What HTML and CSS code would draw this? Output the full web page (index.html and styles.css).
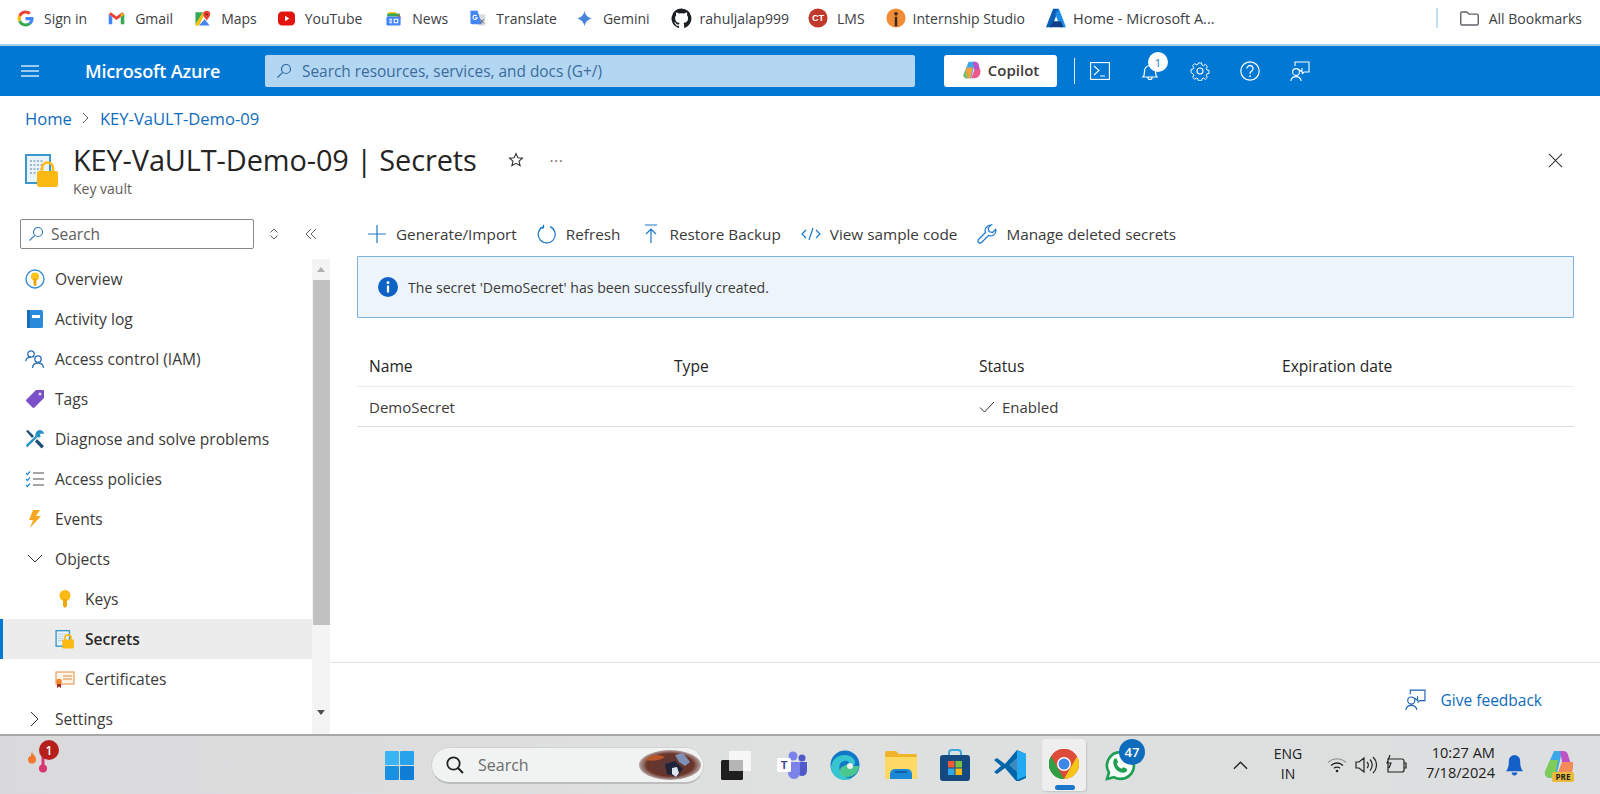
FILE: index.html
```html
<!DOCTYPE html>
<html lang="en">
<head>
<meta charset="utf-8">
<title>KEY-VaULT-Demo-09 | Secrets</title>
<link rel="stylesheet" href="styles.css">
</head>
<body>
<div class="page">
  <nav class="bookmarks">
    <a class="bm bm-signin"><svg class="bi" viewBox="0 0 24 24"><path fill="#ea4335" d="M12 5c1.7 0 3.2.6 4.4 1.7l3.2-3.2C17.600 1.700 15 .7 12 .7 7.600.7 3.800 3.200 2 6.900l3.700 2.900C6.600 7 9.100 5 12 5z"/><path fill="#4285f4" d="M23.300 12.300c0-.8-.1-1.600-.2-2.300H12v4.500h6.300c-.3 1.500-1.100 2.700-2.400 3.500l3.600 2.800c2.200-2 3.800-5 3.800-8.500z"/><path fill="#fbbc05" d="M5.700 14.200c-.5-1.400-.5-3 0-4.400L2 6.900c-1.600 3.200-1.600 7 0 10.200z"/><path fill="#34a853" d="M12 23.300c3 0 5.600-1 7.500-2.700L15.900 18c-1 .7-2.300 1.100-3.900 1.100-2.900 0-5.400-2-6.300-4.700L2 17.100c1.800 3.700 5.600 6.200 10 6.200z"/></svg>Sign in</a>
    <a class="bm bm-gmail"><svg class="bi" viewBox="0 0 24 24"><path fill="#4285f4" d="M1 6v14h5V10z"/><path fill="#34a853" d="M18 10v10h5V6z"/><path fill="#ea4335" d="M1 6l11 8 11-8-3-3-8 6-8-6z"/><path fill="#fbbc05" d="M18 4.500L23 6v0l-5 4z"/></svg>Gmail</a>
    <a class="bm bm-maps"><svg class="bi" viewBox="0 0 24 24"><path fill="#34a853" d="M2 3l11 0-11 17z"/><path fill="#fbbc05" d="M2 20L13 3h3L7 22H2z"/><path fill="#4285f4" d="M7 22l8-9 7 9z"/><path fill="#ea4335" d="M18 1a5 5 0 0 1 5 5c0 3-3 5-5 9-1-3-5-5-5-9a5 5 0 0 1 5-5z"/><circle cx="18" cy="6" r="1.800" fill="#8e2a1f"/></svg>Maps</a>
    <a class="bm bm-yt"><svg class="bi" viewBox="0 0 24 24"><rect x="0" y="2" width="24" height="20" rx="6" fill="#e3130f"/><path fill="#fff" d="M10 8l6 4-6 4z"/></svg>YouTube</a>
    <a class="bm bm-news"><svg class="bi" viewBox="0 0 24 24"><path fill="#fbbc05" d="M5 3h11v6H5z"/><path fill="#34a853" d="M3 5h18v4H3z"/><path fill="#ea4335" d="M18 6l4 3v3h-4z"/><rect x="2" y="9" width="20" height="13" rx="2" fill="#4285f4"/><path stroke="#fff" stroke-width="1.500" fill="none" d="M6 13h4M6 15.500h4M6 18h4M13 13h5v5h-5z"/></svg>News</a>
    <a class="bm bm-tr"><svg class="bi" viewBox="0 0 24 24"><path fill="#dadce0" d="M10 6h13v16H13z"/><path fill="#4285f4" d="M2 1h10l6 19H4a2 2 0 0 1-2-2z"/><path fill="none" stroke="#fff" stroke-width="1.500" d="M11 8.500a3 3 0 1 0 .5 2.500H8.500"/><path stroke="#5f6368" stroke-width="1.400" d="M16 13l5 6M21 13l-5 6"/></svg>Translate</a>
    <a class="bm bm-gem"><svg class="bi" viewBox="0 0 24 24"><path fill="#4b84dc" d="M12 1c1 6 5 10 11 11-6 1-10 5-11 11-1-6-5-10-11-11 6-1 10-5 11-11z"/></svg>Gemini</a>
    <a class="bm bm-gh"><svg class="bi bi-lg" viewBox="0 0 24 24"><path fill="#1b1f23" d="M12 .5a11.500 11.500 0 0 0-3.600 22.400c.6.100.8-.3.800-.6v-2c-3.200.7-3.900-1.500-3.900-1.500-.5-1.300-1.300-1.700-1.300-1.700-1-.7.100-.7.100-.7 1.200.1 1.800 1.200 1.800 1.200 1 1.800 2.700 1.300 3.400 1 .1-.8.400-1.300.7-1.600-2.600-.3-5.300-1.300-5.300-5.700 0-1.300.4-2.300 1.200-3.100-.1-.3-.5-1.500.1-3.100 0 0 1-.3 3.200 1.200a11 11 0 0 1 5.800 0c2.200-1.500 3.200-1.200 3.200-1.200.6 1.600.2 2.800.1 3.100.7.800 1.200 1.800 1.200 3.100 0 4.400-2.700 5.400-5.300 5.700.4.400.8 1 .8 2.100v3.100c0 .3.200.7.800.6A11.500 11.500 0 0 0 12 .5z"/></svg>rahuljalap999</a>
    <a class="bm bm-lms"><svg class="bi bi-md" viewBox="0 0 24 24"><circle cx="12" cy="12" r="11.500" fill="#c0392b"/><text x="12" y="16" class="lms-mark">CT</text></svg>LMS</a>
    <a class="bm bm-int"><svg class="bi bi-md" viewBox="0 0 24 24"><circle cx="12" cy="12" r="11.500" fill="#f08c35"/><circle cx="12" cy="7" r="2.200" fill="#3b2a20"/><path fill="#3b2a20" d="M10.500 10.500h3V22h-3z"/></svg>Internship Studio</a>
    <a class="bm bm-az"><svg class="bi bi-md" viewBox="0 0 24 24"><path fill="#0a5fb4" d="M8.500 1h7L7 23H0z"/><path fill="#1c8ee6" d="M15.500 1l8.500 22h-7L11 7z"/><path fill="#0f3f86" d="M9 16h9l3 7H4z"/></svg>Home - Microsoft A...</a>
    <span class="bm-spacer"></span>
    <span class="bm-divider"></span>
    <a class="bm bm-all"><svg class="bi bi-lg" viewBox="0 0 24 24"><path fill="none" stroke="#5f6368" stroke-width="1.600" d="M2 6a1.500 1.500 0 0 1 1.500-1.500H9l2.500 2.500h9A1.500 1.500 0 0 1 22 8.500V18a1.500 1.500 0 0 1-1.500 1.500h-17A1.500 1.500 0 0 1 2 18z"/></svg>All Bookmarks</a>
  </nav>

  <header class="topbar">
    <svg class="hamburger" viewBox="0 0 18 12"><path stroke="#cfe6f8" stroke-width="1.300" d="M0 1h18M0 6h18M0 11h18"/></svg>
    <span class="brand">Microsoft Azure</span>
    <div class="global-search">
      <svg class="gs-icon" viewBox="0 0 16 16"><circle cx="10" cy="6" r="4.500" fill="none" stroke="#2c6aa6" stroke-width="1.200"/><path stroke="#2c6aa6" stroke-width="1.200" d="M6.700 9.300L1.500 14.500"/></svg>
      <span>Search resources, services, and docs (G+/)</span>
    </div>
    <div class="copilot">
      <svg class="cp-icon" viewBox="0 0 24 24"><path fill="#3aa7e8" d="M8 2h8l-5 20H6a4 4 0 0 1-4-5z"/><path fill="#c052c8" d="M13 2h3a4 4 0 0 1 4 3l2 9h-7z"/><path fill="#f5a13a" d="M6 9h7l-3 13H6a4 4 0 0 1-4-5z"/><path fill="#6bc36b" d="M4 12l3 10H5a3 3 0 0 1-3-4z"/><path fill="#ec5a8c" d="M15 11h7v4a7 7 0 0 1-7 7h-4z"/></svg>
      <span>Copilot</span>
    </div>
    <span class="tb-divider"></span>
    <svg class="tb-icon tb-term" viewBox="0 0 20 20"><rect x=".6" y="1.600" width="18.800" height="16.800" fill="none" stroke="#fff" stroke-width="1.100"/><path fill="none" stroke="#fff" stroke-width="1.100" d="M4 5l5 4.500L4 14M10 15h5"/></svg>
    <div class="tb-bell">
      <svg class="tb-icon" viewBox="0 0 20 20"><path fill="none" stroke="#fff" stroke-width="1.200" d="M3 16c1.500-1.500 1.500-3 1.500-6a5.500 5.500 0 0 1 11 0c0 3 0 4.500 1.500 6zM8 16.500a2 2 0 0 0 4 0"/></svg>
      <span class="tb-badge">1</span>
    </div>
    <svg class="tb-icon tb-gear" viewBox="0 0 20 20"><path fill="none" stroke="#fff" stroke-width="1.100" d="M8.300 1h3.400l.5 2.400 1.700.7 2-1.300 2.300 2.300-1.300 2 .7 1.700 2.400.5v3.400l-2.400.5-.7 1.700 1.300 2-2.300 2.300-2-1.300-1.700.7-.5 2.400H8.300l-.5-2.400-1.700-.7-2 1.300-2.300-2.300 1.300-2-.7-1.700L0 11.700V8.300l2.400-.5.7-1.700-1.300-2 2.300-2.300 2 1.300 1.700-.7z" transform="translate(1 1) scale(.9)"/><circle cx="10" cy="10" r="3" fill="none" stroke="#fff" stroke-width="1.100"/></svg>
    <svg class="tb-icon tb-help" viewBox="0 0 20 20"><circle cx="10" cy="10" r="9.200" fill="none" stroke="#fff" stroke-width="1.200"/><path fill="none" stroke="#fff" stroke-width="1.300" d="M7 7.500a3 3 0 1 1 4.700 2.500c-1.200.8-1.700 1.400-1.700 2.700"/><circle cx="10" cy="15.200" r=".9" fill="#fff"/></svg>
    <svg class="tb-icon tb-fb" viewBox="0 0 20 20"><path fill="none" stroke="#fff" stroke-width="1.100" d="M5 5V1h14v10h-5l-2 2M9 8.500l3 2.500V7"/><circle cx="6" cy="11" r="3.400" fill="none" stroke="#fff" stroke-width="1.100"/><path fill="none" stroke="#fff" stroke-width="1.100" d="M.7 20a5.400 5.400 0 0 1 10.600 0"/></svg>
  </header>

  <main class="blade">
    <div class="crumbs"><a>Home</a><svg class="crumb-sep" viewBox="0 0 8 12"><path fill="none" stroke="#605e5c" stroke-width="1" d="M1 1l5 5-5 5"/></svg><a>KEY-VaULT-Demo-09</a></div>
    <div class="blade-head">
      <svg class="vault-icon" viewBox="0 0 34 36"><rect x="1" y="3" width="24" height="28" fill="#eaf3fa" stroke="#3f97c9" stroke-width="2"/><path stroke="#9cbcd4" stroke-width="2" stroke-dasharray="2 1.500" d="M5 9h14M5 13h14M5 17h14M5 21h10"/><rect x="12" y="19" width="21" height="16" rx="2" fill="#fdb913"/><path fill="none" stroke="#fdb913" stroke-width="2.600" d="M17 20v-4a5.500 5.500 0 0 1 11 0v4"/></svg>
      <div class="head-text">
        <div class="title-row">
          <h1>KEY-VaULT-Demo-09 | Secrets</h1>
          <svg class="star" viewBox="0 0 16 16"><path fill="none" stroke="#323130" stroke-width="1.100" d="M8 1.500l1.900 4.300 4.600.4-3.500 3 1.100 4.500L8 11.300l-4.100 2.400L5 9.200l-3.500-3 4.600-.4z"/></svg>
          <span class="more">···</span>
        </div>
        <div class="subtitle">Key vault</div>
      </div>
      <svg class="close" viewBox="0 0 16 16"><path stroke="#323130" stroke-width="1.100" d="M1 1l14 14M15 1L1 15"/></svg>
    </div>

    <div class="workspace">
      <aside class="side">
        <div class="side-tools">
          <div class="side-search">
            <svg class="ss-icon" viewBox="0 0 16 16"><circle cx="10" cy="6" r="4.500" fill="none" stroke="#2e78b8" stroke-width="1.100"/><path stroke="#2e78b8" stroke-width="1.100" d="M6.700 9.300L1.500 14.500"/></svg>
            <span>Search</span>
          </div>
          <svg class="updown" viewBox="0 0 10 14"><path fill="none" stroke="#605e5c" d="M1.500 5.500L5 2l3.500 3.500M1.500 8.500L5 12l3.500-3.500"/></svg>
          <svg class="collapse" viewBox="0 0 12 12"><path fill="none" stroke="#605e5c" d="M6 1L1 6l5 5M11 1L6 6l5 5"/></svg>
        </div>
        <div class="side-body">
          <ul class="menu">
            <li class="item"><svg class="mi" viewBox="0 0 20 20"><circle cx="10" cy="10" r="9" fill="#fff" stroke="#3b8fd1" stroke-width="1.400"/><circle cx="10" cy="7.500" r="4" fill="#fcc419"/><path fill="#eba90e" d="M8.500 9h3v7l-1.500 1.500L8.500 16z"/></svg>Overview</li>
            <li class="item"><svg class="mi" viewBox="0 0 20 20"><rect x="2" y="1" width="16" height="18" rx="1.500" fill="#2a8bdc"/><rect x="2" y="1" width="3" height="18" fill="#1b6cb2"/><rect x="7" y="6" width="8" height="3" fill="#fff"/></svg>Activity log</li>
            <li class="item"><svg class="mi" viewBox="0 0 20 20"><g fill="none" stroke="#2a6fb8" stroke-width="1.300"><circle cx="6" cy="5" r="3.200"/><path d="M.7 12c.5-2.500 2.500-3.800 5.300-3.800"/><circle cx="13" cy="10" r="3.200"/><path d="M7.500 19c.3-3 2.500-5 5.500-5s5.200 2 5.500 5"/></g></svg>Access control (IAM)</li>
            <li class="item"><svg class="mi" viewBox="0 0 20 20"><path fill="#7b4fc9" d="M11 1h7a1 1 0 0 1 1 1v7L9.500 18.500a1.500 1.500 0 0 1-2 0l-6-6a1.500 1.500 0 0 1 0-2z"/><circle cx="15" cy="5" r="1.500" fill="#e2d6f5"/></svg>Tags</li>
            <li class="item"><svg class="mi" viewBox="0 0 20 20"><path fill="#2590c4" d="M15 1a4.500 4.500 0 0 1 4 4l-3-.5-1 1 .5 2.500c-1 .5-2 .5-3 0L2 18.500 1 16 10.500 7c-.5-2 .8-6 4.500-6z"/><path fill="#1f4e79" d="M1 2l2-1 6 6-2 2zM12 10l7 7-2.500 2.500L10 12.500z"/></svg>Diagnose and solve problems</li>
            <li class="item"><svg class="mi" viewBox="0 0 20 20"><path fill="none" stroke="#2a8bdc" stroke-width="1.200" d="M1 4l1.500 1.500L5 2.500M1 10l1.500 1.500L5 8.500M1 16l1.500 1.500L5 14.500"/><path stroke="#8a8886" stroke-width="1.500" d="M8 4h11M8 10h11M8 16h11"/></svg>Access policies</li>
            <li class="item"><svg class="mi" viewBox="0 0 20 20"><path fill="#f7a823" d="M8 1h7l-4 6h5L5 19l3-8H4z"/></svg>Events</li>
            <li class="item"><svg class="mi chev" viewBox="0 0 16 10"><path fill="none" stroke="#323130" stroke-width="1" d="M1 1l7 7 7-7"/></svg>Objects</li>
            <li class="item sub"><svg class="mi" viewBox="0 0 20 20"><circle cx="10" cy="6.500" r="5.500" fill="#fdb913"/><path fill="#eba90e" d="M8 10h4v7l-2 2-2-2z"/></svg>Keys</li>
            <li class="item sub active"><svg class="mi" viewBox="0 0 34 36"><rect x="1" y="3" width="24" height="28" fill="#eaf3fa" stroke="#3f97c9" stroke-width="2.500"/><path stroke="#9cbcd4" stroke-width="2" stroke-dasharray="2 1.500" d="M5 9h14M5 13h14M5 17h14M5 21h10"/><rect x="12" y="19" width="21" height="16" rx="2" fill="#fdb913"/><path fill="none" stroke="#fdb913" stroke-width="3" d="M17 20v-4a5.500 5.500 0 0 1 11 0v4"/></svg>Secrets</li>
            <li class="item sub"><svg class="mi" viewBox="0 0 20 20"><rect x="1" y="3" width="18" height="12" fill="#fdf3e6" stroke="#e5a15e" stroke-width="1.200"/><path stroke="#d98b45" stroke-width="1" d="M8 7h9M8 10h9"/><path fill="#b02318" d="M2 13h4v6l-2-1.500L2 19z"/><circle cx="4" cy="12.500" r="2.800" fill="#ee8a2f"/></svg>Certificates</li>
            <li class="item"><svg class="mi chev chev-r" viewBox="0 0 10 16"><path fill="none" stroke="#323130" stroke-width="1" d="M1 1l7 7-7 7"/></svg>Settings</li>
          </ul>
          <div class="scroll">
            <span class="arrow arrow-up"></span>
            <span class="thumb"></span>
            <span class="arrow arrow-down"></span>
          </div>
        </div>
      </aside>

      <section class="main">
        <div class="content">
          <div class="toolbar">
            <span class="tool"><svg class="ti" viewBox="0 0 20 20"><path stroke="#1a78c8" stroke-width="1.200" d="M10 1v18M1 10h18"/></svg>Generate/Import</span>
            <span class="tool"><svg class="ti ti-refresh" viewBox="0 0 20 20"><path fill="none" stroke="#1a78c8" stroke-width="1.200" d="M13 2.600a8.500 8.500 0 1 1-7 .2M6.500 .8v3H3"/></svg>Refresh</span>
            <span class="tool"><svg class="ti" viewBox="0 0 20 20"><path fill="none" stroke="#1a78c8" stroke-width="1.200" d="M4 1h12M10 19V5M5 10l5-5 5 5"/></svg>Restore Backup</span>
            <span class="tool"><svg class="ti" viewBox="0 0 20 20"><path fill="none" stroke="#1a78c8" stroke-width="1.200" d="M5 6l-4 4 4 4M15 6l4 4-4 4M12 4L8 16"/></svg>View sample code</span>
            <span class="tool"><svg class="ti" viewBox="0 0 20 20"><path fill="none" stroke="#1a78c8" stroke-width="1.200" d="M13.500 1a5.500 5.500 0 0 0-5 7.500L1.500 15.500a2.100 2.100 0 0 0 3 3l7-7a5.500 5.500 0 0 0 7.500-5l-.3-1.200-3.200 3.200-3.500-1-1-3.500 3.200-3.200z"/></svg>Manage deleted secrets</span>
          </div>
          <div class="notice">
            <svg class="info" viewBox="0 0 20 20"><circle cx="10" cy="10" r="10" fill="#0f62c4"/><rect x="8.900" y="8.500" width="2.200" height="7" fill="#fff"/><circle cx="10" cy="5.700" r="1.400" fill="#fff"/></svg>
            The secret 'DemoSecret' has been successfully created.
          </div>
          <div class="grid-table">
            <div class="row head"><span>Name</span><span>Type</span><span>Status</span><span>Expiration date</span></div>
            <div class="row body-row"><span>DemoSecret</span><span></span><span class="status"><svg class="check" viewBox="0 0 16 12"><path fill="none" stroke="#323130" stroke-width="1" d="M1 6.500L5.500 11 15 1"/></svg>Enabled</span><span></span></div>
          </div>
        </div>
        <div class="foot">
          <svg class="fb-icon" viewBox="0 0 20 20"><path fill="none" stroke="#1f62b5" stroke-width="1.100" d="M5 5V1h14v10h-5l-2 2M9 8.500l3 2.500V7"/><circle cx="6" cy="11" r="3.400" fill="none" stroke="#1f62b5" stroke-width="1.100"/><path fill="none" stroke="#1f62b5" stroke-width="1.100" d="M.7 20a5.400 5.400 0 0 1 10.600 0"/></svg>
          <a>Give feedback</a>
        </div>
      </section>
    </div>
  </main>

  <footer class="taskbar">
    <div class="tk-left">
      <svg class="tk-fire" viewBox="0 0 10 12"><path fill="#f2762e" d="M5 0c1 3 4 4 4 7.500A4 4 0 0 1 1 7.500C1 6 2 5 2.500 4 3 5 4 5 4 4S4 1.500 5 0z"/></svg>
      <svg class="tk-thermo" viewBox="0 0 12 22"><rect x="4.500" y="0" width="3" height="16" fill="#d9356e"/><circle cx="6" cy="16.500" r="4" fill="#d9356e"/></svg>
      <span class="tk-red">1</span>
    </div>
    <div class="tk-center">
      <svg class="tk-win" viewBox="0 0 29 29"><rect width="14" height="14" rx="1" fill="#3ab4f2"/><rect x="15" width="14" height="14" rx="1" fill="#28a2ea"/><rect y="15" width="14" height="14" rx="1" fill="#1a90e0"/><rect x="15" y="15" width="14" height="14" rx="1" fill="#0f7dd4"/></svg>
      <div class="tk-search">
        <svg class="tk-q" viewBox="0 0 18 18"><circle cx="7.500" cy="7.500" r="6.200" fill="none" stroke="#222" stroke-width="1.800"/><path stroke="#222" stroke-width="2" d="M12 12l5 5"/></svg>
        <span>Search</span>
        <svg class="tk-art" viewBox="0 0 62 30"><defs><radialGradient id="artGlow" cx=".5" cy=".5" r=".5"><stop offset="0" stop-color="#5a3a3a"/><stop offset=".75" stop-color="#6a3428"/><stop offset="1" stop-color="#b9a6a6"/></radialGradient></defs><ellipse cx="31" cy="15" rx="31" ry="15" fill="url(#artGlow)"/><path fill="#b8552a" d="M6 10c6-6 14-6 20-3-4 3-12 5-20 3z"/><path fill="#7f8fb5" d="M36 5l8-2 7 9-5 4-6-4z"/><path fill="#20243a" d="M26 14l10-3 8 8-6 8-10-3z"/><path fill="#dfe4ee" d="M33 18l5-1 2 6-3 4-4-3z"/></svg>
      </div>
      <svg class="tk-view" viewBox="0 0 30 29"><rect x="8" y="0" width="22" height="20" fill="#f7f7f7"/><rect x="0" y="9" width="22" height="20" rx="1.500" fill="#1f1f1f"/><rect x="8" y="9" width="14" height="11" fill="#b5b5b5"/></svg>
      <svg class="tk-teams" viewBox="0 0 30 28"><circle cx="16" cy="5" r="4.500" fill="#7b83eb"/><circle cx="25" cy="7" r="3.500" fill="#5059c9"/><path fill="#5059c9" d="M20 11h10v9a5 5 0 0 1-8 4z"/><path fill="#7b83eb" d="M8 11h15v11a6 6 0 0 1-12 0z"/><rect x="0" y="7" width="14" height="14" rx="1.500" fill="#fff"/><text x="7" y="18" class="teams-t">T</text></svg>
      <svg class="tk-edge" viewBox="0 0 30 30"><circle cx="15" cy="15" r="14.500" fill="#1277c8"/><path fill="#37c6d0" d="M1 17C2 9 8 5 15 5c6 0 10 4 10 8 0 2-2 3-5 3 1-3-2-6-6-5-5 1-6 7-3 12 2 3 6 6 11 5-1 1-3 2-7 2C7 30 1 24 1 17z"/><path fill="#5ee07c" d="M16 15c1-1 4-1 4 1l9 0c0 6-5 11-12 11-5 0-7-3-7-7 0-2 2-4 6-5z" opacity=".75"/><circle cx="20" cy="16" r="3" fill="#eee"/></svg>
      <svg class="tk-folder" viewBox="0 0 32 28"><path fill="#f0b429" d="M0 2a2 2 0 0 1 2-2h9l3 3h16a2 2 0 0 1 2 2v21a2 2 0 0 1-2 2H2a2 2 0 0 1-2-2z"/><path fill="#ffd966" d="M0 6h32v20a2 2 0 0 1-2 2H2a2 2 0 0 1-2-2z"/><path fill="#1a8ad8" d="M5 28v-5a5 5 0 0 1 5-5h12a5 5 0 0 1 5 5v5z"/><rect x="10" y="20" width="12" height="2" fill="#0d5fa8"/></svg>
      <svg class="tk-store" viewBox="0 0 30 32"><path fill="none" stroke="#3aa6e0" stroke-width="2" d="M9 7V4a3 3 0 0 1 3-3h6a3 3 0 0 1 3 3v3"/><rect y="6" width="30" height="26" rx="3" fill="#144a80"/><rect x="8" y="12" width="6.500" height="6.500" fill="#ee5a3a"/><rect x="15.500" y="12" width="6.500" height="6.500" fill="#7cc242"/><rect x="8" y="19.500" width="6.500" height="6.500" fill="#2ea8e8"/><rect x="15.500" y="19.500" width="6.500" height="6.500" fill="#fdb913"/></svg>
      <svg class="tk-code" viewBox="0 0 32 32"><path fill="#0065a9" d="M0 11l3-2 8 6 12-14 9 4v24l-9 4-12-14-8 6-3-2 7-6z"/><path fill="#23a9f2" d="M23 1l9 4v22l-9 4z"/><path fill="#fff" opacity=".25" d="M23 9l-8 7 8 7z"/></svg>
      <div class="tk-chrome">
        <svg class="tk-chrome-i" viewBox="0 0 30 30"><circle cx="15" cy="15" r="15" fill="#dd4b39"/><path fill="#2f9e44" d="M2 7.500L15 30a15 15 0 0 1-13-22.500z"/><path fill="#f5c518" d="M28 7.500L15 30a15 15 0 0 0 13-22.500z"/><path fill="#2f9e44" d="M2 7.500l7 13 6 9.500A15 15 0 0 1 2 7.500z"/><path fill="#dd4b39" d="M2 7.500A15 15 0 0 1 28 7.500H15z"/><circle cx="15" cy="15" r="7" fill="#fff"/><circle cx="15" cy="15" r="5.500" fill="#3d85e6"/></svg>
        <span class="tk-pill"></span>
      </div>
      <div class="tk-wa">
        <svg class="tk-wa-i" viewBox="0 0 30 30"><path fill="#f6fff8" stroke="#1f9e54" stroke-width="2.600" d="M15 2a13 13 0 0 1 0 26c-2.500 0-4.500-.6-6.500-1.700L2 28l1.800-6.300A13 13 0 0 1 15 2z"/><path fill="#1f9e54" d="M10.500 8c1 0 1.500 2.500 2 3.500 0 1-1 1.500-1 2.200 1 2 2.500 3.500 4.500 4.300.7 0 1.300-1.300 2-1.300 1 .5 3.500 1.500 3.500 2.300 0 1.500-2 3-3.800 3C12 22 8 16.500 8 12c0-2 1.300-4 2.500-4z"/></svg>
        <span class="tk-wa-badge">47</span>
      </div>
    </div>
    <div class="tk-tray">
      <svg class="tk-chev" viewBox="0 0 16 10"><path fill="none" stroke="#222" stroke-width="1.400" d="M1 9l7-7 7 7"/></svg>
      <div class="tk-lang"><span>ENG</span><span>IN</span></div>
      <svg class="tk-wifi" viewBox="0 0 20 16"><path fill="none" stroke="#9a9a9a" stroke-width="1.300" d="M1 5.500a13 13 0 0 1 18 0"/><path fill="none" stroke="#222" stroke-width="1.300" d="M4 8.500a8.500 8.500 0 0 1 12 0M7 11.300a4.200 4.200 0 0 1 6 0"/><circle cx="10" cy="14" r="1.300" fill="#222"/></svg>
      <svg class="tk-vol" viewBox="0 0 22 20"><path fill="none" stroke="#222" stroke-width="1.200" d="M1 7v6h3l5 4V3L4 7zM12 7a4 4 0 0 1 0 6M15 4.500a8 8 0 0 1 0 11M18 2a11 11 0 0 1 0 16"/></svg>
      <svg class="tk-bat" viewBox="0 0 22 22"><path fill="none" stroke="#222" stroke-width="1.200" d="M3 5h14a2 2 0 0 1 2 2v9a2 2 0 0 1-2 2H3zM19 9h2v5h-2M5 1L2 9h4l-2 5"/></svg>
      <div class="tk-clock"><span>10:27 AM</span><span>7/18/2024</span></div>
      <svg class="tk-bell" viewBox="0 0 18 22"><path fill="#1560c8" d="M9 0a6 6 0 0 1 6 6c0 5 .5 8 3 11H0c2.500-3 3-6 3-11a6 6 0 0 1 6-6z"/><path fill="#1560c8" d="M6 18.500h6a3 3 0 0 1-6 0z"/></svg>
      <div class="tk-cp">
        <svg class="tk-cp-i" viewBox="0 0 30 30"><path fill="#3aa7e8" d="M10 1h8l-6 27H6a5 5 0 0 1-5-6z"/><path fill="#c052c8" d="M16 1h3a5 5 0 0 1 5 4l4 12h-9z"/><path fill="#7ecb5a" d="M6 10h8l-3 18H6a5 5 0 0 1-5-6z"/><path fill="#f28a5a" d="M18 12h11v5a11 11 0 0 1-11 11h-6z"/></svg>
        <span class="tk-pre">PRE</span>
      </div>
    </div>
  </footer>
</div>
</body>
</html>
```
FILE: styles.css
```css
* { box-sizing: border-box; }
html, body { margin: 0; height: 100%; overflow: hidden; }
body { font-family: "Open Sans", "Noto Sans", "Liberation Sans", sans-serif; color: #323130; background: #fff; }
a { color: inherit; text-decoration: none; }
ul { list-style: none; margin: 0; padding: 0; }
.page { display: flex; flex-direction: column; height: 794px; width: 1600px; }

/* bookmarks */
.bookmarks { height: 46px; flex: none; display: flex; align-items: center; padding: 0 18px 8px 17px; border-bottom: 2px solid #a9d1ea; font-size: 14px; color: #3c4043; background: #fff; }
.bm { display: flex; align-items: center; gap: 10px; margin-right: 21px; white-space: nowrap; }
.bm-yt { margin-right: 23px; }
.bm-tr { margin-right: 19px; }
.bm-gh { gap: 8px; margin-right: 19px; }
.bm-lms { gap: 9px; margin-right: 21px; }
.bm-int { gap: 7px; margin-right: 21px; }
.bm-az { gap: 7px; font-size: 14.500px; }
.bi { width: 17px; height: 17px; flex: none; }
.bi-md { width: 20px; height: 20px; }
.bi-lg { width: 21px; height: 21px; }
.lms-mark { font-family: "Liberation Sans", sans-serif; font-size: 11px; font-weight: 700; fill: #fff; text-anchor: middle; }
.bm-spacer { flex: 1; }
.bm-divider { width: 2px; height: 20px; background: #bfe0ee; margin-right: 21px; }
.bm-all { margin-right: 0; gap: 9px; }

/* top bar */
.topbar { height: 50px; flex: none; background: #0078d4; display: flex; align-items: center; padding-left: 21px; color: #fff; }
.hamburger { width: 18px; height: 12px; flex: none; }
.brand { margin-left: 46px; width: 180px; font-size: 18.100px; font-weight: 600; letter-spacing: -.2px; white-space: nowrap; }
.global-search { width: 650px; height: 32px; background: #b3d6f2; border-radius: 2px; display: flex; align-items: center; gap: 10px; padding: 0 0 0 11px; font-size: 15.400px; color: #3b6c9c; }
.gs-icon { width: 16px; height: 16px; }
.copilot { margin-left: 29px; width: 113px; height: 32px; background: #fff; border-radius: 3px; display: flex; align-items: center; justify-content: center; gap: 6px; padding-bottom: 2px; color: #3b3a39; font-size: 15px; font-weight: 600; }
.cp-icon { width: 20px; height: 20px; }
.tb-divider { width: 1px; height: 26px; background: #d7ebf9; margin: 0 15px 0 17px; }
.tb-icon { width: 20px; height: 20px; flex: none; }
.tb-bell { position: relative; margin-left: 30px; width: 20px; height: 20px; }
.tb-badge { position: absolute; left: 8px; top: -9px; width: 20px; height: 20px; border-radius: 50%; background: #fff; color: #0078d4; font-size: 11px; display: flex; align-items: center; justify-content: center; }
.tb-gear { margin-left: 30px; }
.tb-help { margin-left: 30px; }
.tb-fb { margin-left: 30px; }

/* blade */
.blade { flex: 1; min-height: 0; display: flex; flex-direction: column; }
.crumbs { height: 44px; flex: none; padding-left: 25px; display: flex; align-items: center; gap: 10px; font-size: 16.600px; color: #0f6cbd; }
.crumb-sep { width: 8px; height: 12px; }
.blade-head { height: 79px; flex: none; display: flex; align-items: flex-start; padding: 2px 37px 0 25px; }
.vault-icon { width: 34px; height: 36px; margin-top: 10px; flex: none; }
.head-text { margin-left: 14px; flex: 1; }
.title-row { display: flex; align-items: center; height: 36px; }
h1 { margin: 0; font-size: 28.900px; font-weight: 500; color: #252423; line-height: 36px; letter-spacing: -.1px; white-space: nowrap; }
.star { width: 16px; height: 16px; margin-left: 31px; }
.more { margin-left: 26px; font-size: 14px; letter-spacing: 1px; color: #605e5c; }
.subtitle { font-size: 14px; color: #605e5c; margin-top: 2px; line-height: 18px; }
.close { width: 15px; height: 15px; margin-top: 11px; }

.workspace { flex: 1; min-height: 0; display: flex; }
.side { width: 330px; flex: none; display: flex; flex-direction: column; }
.side-tools { height: 40px; flex: none; display: flex; align-items: flex-start; padding-left: 20px; }
.side-search { width: 234px; height: 30px; border: 1px solid #8a8886; border-radius: 2px; display: flex; align-items: center; gap: 7px; padding-left: 7px; font-size: 15.500px; color: #605e5c; }
.ss-icon { width: 16px; height: 16px; }
.updown { width: 10px; height: 14px; margin: 8px 0 0 15px; }
.collapse { width: 12px; height: 12px; margin: 9px 0 0 26px; }
.side-body { flex: 1; min-height: 0; display: flex; }
.menu { width: 312px; flex: none; overflow: hidden; }
.item { height: 40px; display: flex; align-items: center; gap: 10px; padding-left: 25px; font-size: 15.600px; color: #3b3a39; white-space: nowrap; }
.mi { width: 20px; height: 20px; flex: none; }
.chev { width: 16px; height: 10px; margin-right: 2px; margin-left: 2px; }
.chev-r { width: 10px; height: 16px; margin-left: 5px; margin-right: 5px; }
.sub { padding-left: 55px; }
.active { background: #ececec; font-weight: 600; box-shadow: inset 3px 0 0 #0078d4; color: #292827; }
.scroll { width: 18px; flex: none; background: #f4f4f4; display: flex; flex-direction: column; align-items: center; }
.thumb { width: 17px; height: 345px; background: #c1c1c1; margin-left: 1px; }
.arrow { width: 0; height: 0; border-left: 4px solid transparent; border-right: 4px solid transparent; }
.arrow-up { border-bottom: 5px solid #b0b0b0; margin: 8px 0 8px; }
.arrow-down { border-top: 5px solid #505050; margin-top: 85px; }

.main { flex: 1; min-width: 0; display: flex; flex-direction: column; }
.content { flex: 1; min-height: 0; padding: 0 26px 0 27px; }
.toolbar { height: 37px; display: flex; align-items: flex-start; gap: 20px; padding-left: 10px; font-size: 15.300px; color: #3b3a39; }
.tool { display: flex; align-items: center; gap: 9px; height: 30px; white-space: nowrap; }
.ti { width: 20px; height: 20px; flex: none; }
.notice { height: 62px; background: #edf4fc; border: 1px solid #7fb0dc; border-radius: 1px; display: flex; align-items: center; gap: 10px; padding-left: 20px; font-size: 14.100px; color: #3b3a39; }
.info { width: 20px; height: 20px; flex: none; }
.grid-table { margin-top: 27px; }
.row { display: grid; grid-template-columns: 305px 305px 303px 1fr; padding-left: 12px; align-items: center; font-size: 15px; }
.head { height: 42px; border-bottom: 1px solid #edebe9; font-size: 15.600px; font-weight: 500; color: #252423; }
.body-row { height: 40px; border-bottom: 1px solid #dcdcdc; color: #3b3a39; }
.status { display: flex; align-items: center; gap: 7px; }
.check { width: 16px; height: 12px; }
.foot { height: 72px; flex: none; border-top: 1px solid #e1e1e1; display: flex; align-items: center; justify-content: flex-end; gap: 15px; padding: 2px 58px 0 0; font-size: 15.500px; color: #0f6cbd; }
.fb-icon { width: 21px; height: 21px; }

/* taskbar */
.taskbar { height: 60px; flex: none; background: linear-gradient(90deg, #dadadc 0%, #dfe0e0 50%, #dcdedf 100%); border-top: 2px solid #a8a8a8; display: flex; align-items: center; position: relative; }
.tk-left { position: relative; width: 385px; height: 100%; flex: none; }
.tk-fire { position: absolute; left: 27px; top: 16px; width: 10px; height: 12px; }
.tk-thermo { position: absolute; left: 37px; top: 16px; width: 12px; height: 22px; }
.tk-red { position: absolute; left: 39px; top: 4px; width: 20px; height: 20px; border-radius: 50%; background: #b5201c; color: #fff; font-size: 12px; font-weight: 600; display: flex; align-items: center; justify-content: center; }
.tk-center { display: flex; align-items: center; flex: none; }
.tk-win { width: 29px; height: 29px; }
.tk-search { margin-left: 17px; width: 273px; height: 37px; border-radius: 19px; background: #f1f3f3; border: 1px solid #d2d2d2; border-bottom: 2px solid #bdbdbd; display: flex; align-items: center; padding-left: 14px; font-size: 16px; color: #6b6b6b; position: relative; }
.tk-q { width: 18px; height: 18px; margin-right: 14px; }
.tk-art { position: absolute; right: 2px; top: 2px; width: 62px; height: 30px; }
.tk-view { width: 30px; height: 29px; margin-left: 17px; }
.tk-teams { width: 30px; height: 28px; margin-left: 26px; }
.tk-edge { width: 30px; height: 30px; margin-left: 23px; }
.tk-folder { width: 32px; height: 28px; margin-left: 25px; }
.tk-store { width: 30px; height: 32px; margin-left: 23px; }
.tk-code { width: 32px; height: 32px; margin-left: 24px; }
.tk-chrome { width: 44px; height: 52px; margin-left: 16px; background: #eeeeee; border-radius: 4px; box-shadow: 1px 1px 2px #c4c4c4; display: flex; align-items: center; justify-content: center; position: relative; }
.tk-chrome-i { width: 30px; height: 30px; margin-bottom: 2px; }
.tk-pill { position: absolute; left: 13px; bottom: 1px; width: 20px; height: 5px; border-radius: 3px; background: #1a77c9; }
.tk-wa { position: relative; margin-left: 19px; width: 31px; height: 31px; }
.tk-wa-i { width: 31px; height: 31px; }
.tk-wa-badge { position: absolute; left: 14px; top: -11px; width: 26px; height: 26px; border-radius: 50%; background: #0f6cbd; color: #fff; font-size: 13px; font-weight: 600; display: flex; align-items: center; justify-content: center; }
.tk-tray { margin-left: 97px; display: flex; align-items: center; flex: none; font-size: 14px; color: #222; }
.tk-chev { width: 15px; height: 10px; }
.tk-lang { margin-left: 25px; width: 30px; display: flex; flex-direction: column; align-items: center; line-height: 20px; font-size: 14px; padding-bottom: 2px; }
.tk-wifi { width: 20px; height: 16px; margin-left: 24px; }
.tk-vol { width: 22px; height: 20px; margin-left: 8px; }
.tk-bat { width: 22px; height: 22px; margin-left: 8px; }
.tk-clock { width: 70px; margin-left: 18px; display: flex; flex-direction: column; align-items: flex-end; line-height: 20px; font-size: 14.600px; padding-bottom: 6px; white-space: nowrap; }
.tk-bell { width: 17px; height: 21px; margin-left: 11px; }
.tk-cp { position: relative; width: 30px; height: 30px; margin-left: 21px; }
.tk-cp-i { width: 30px; height: 30px; }
.tk-pre { position: absolute; left: 8px; bottom: -2px; width: 22px; height: 10px; background: #e8b93a; border-radius: 2px; font-size: 8px; line-height: 10px; font-weight: 700; text-align: center; color: #222; }
.teams-t { font-family: "Liberation Sans", sans-serif; font-size: 11px; font-weight: 700; fill: #3d3f9e; text-anchor: middle; }
```
